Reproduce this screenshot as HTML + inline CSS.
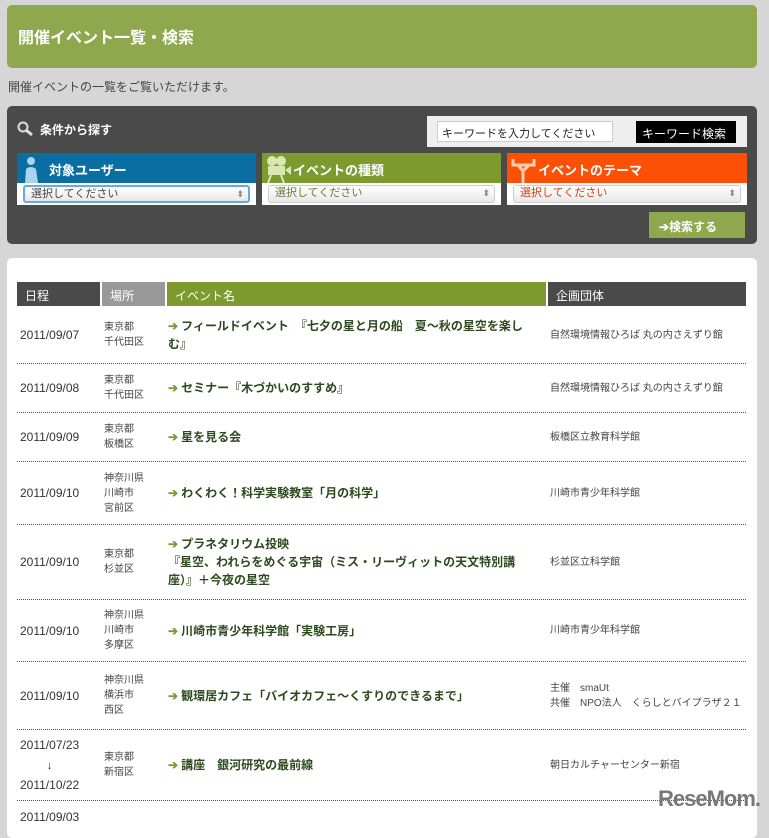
<!DOCTYPE html>
<html><head><meta charset="utf-8"><style>
*{margin:0;padding:0;box-sizing:border-box}
body{width:769px;height:822px;overflow:hidden;background:#d6d6d6;font-family:"Liberation Sans","Noto Sans CJK JP",sans-serif;position:relative;color:#333}
.abs{position:absolute}
.hdr{left:7px;top:5px;width:750px;height:63px;background:#8fa84e;border-radius:5px;color:#fff;font-weight:bold;font-size:16px;padding:19px 0 0 11px}
.sub{left:8px;top:78px;font-size:12px;color:#444}
.dark{left:7px;top:106px;width:750px;height:138px;background:#4a4a4a;border-radius:5px}
.sel{height:22px;background:#fff;position:relative}
.selbox{position:absolute;left:6px;top:2px;right:6px;height:18px;border:1px solid #ccc;border-radius:3px;background:linear-gradient(#fff,#e8e8e8);font-size:11px;line-height:15px;padding:0 0 0 6px}
.selbox:after{content:"⬍";position:absolute;right:4px;top:0;font-size:9px;color:#888}
.cat{height:30px;color:#fff;font-weight:bold;font-size:13px;padding:7px 0 0 32px;position:relative}
.white{left:7px;top:258px;width:750px;height:580px;background:#fff;border-radius:5px}
.th{top:282px;height:24px;color:#fff;font-size:12px;padding:5px 0 0 8px}
.row{left:17px;width:729px;border-bottom:1px dotted #555}
.c{position:absolute;top:0;bottom:0;display:flex;align-items:center}
.d{left:3px;font-size:12px;color:#333;text-align:center}
.p{left:87px;font-size:10px;line-height:15px;color:#444}
.e{left:151px;width:370px;font-size:12px;font-weight:bold;color:#2d4a1e;line-height:18px}
.o{left:533px;font-size:10px;color:#444;line-height:15px}
.ar{color:#7a9a3a;font-weight:bold;margin-right:3px}
</style></head><body>
<div class="abs hdr">開催イベント一覧・検索</div>
<div class="abs sub">開催イベントの一覧をご覧いただけます。</div>
<div class="abs dark"></div>
<svg class="abs" style="left:17px;top:121px" width="18" height="16"><circle cx="6" cy="6" r="4.5" fill="none" stroke="#ddd" stroke-width="2"/><line x1="9" y1="9" x2="15" y2="14" stroke="#ddd" stroke-width="3"/></svg>
<div class="abs" style="left:40px;top:121px;color:#fff;font-weight:bold;font-size:12px">条件から探す</div>
<div class="abs" style="left:427px;top:116px;width:320px;height:31px;background:#eee"></div>
<div class="abs" style="left:437px;top:121px;width:176px;height:21px;background:#fff;border:1px solid #ccc;font-size:11px;padding:3px 4px;color:#222">キーワードを入力してください</div>
<div class="abs" style="left:636px;top:121px;width:100px;height:22px;background:#000;color:#fff;font-size:12px;padding:4px 0 0 6px;white-space:nowrap">キーワード検索</div>
<div class="abs" style="left:17px;top:153px;width:239px"><div class="cat" style="background:#0b6ea2"><svg style="position:absolute;left:4px;top:2px" width="20" height="28"><circle cx="10" cy="6" r="4" fill="#a8d4f0"/><path d="M4 28 L5 14 Q10 10 15 14 L17 28 Z" fill="#a8d4f0"/></svg>対象ユーザー</div><div class="sel"><div class="selbox" style="border:2px solid #6aa8e0;color:#444">選択してください</div></div></div>
<div class="abs" style="left:262px;top:153px;width:239px"><div class="cat" style="background:#7c9a2e;padding-left:31px"><svg style="position:absolute;left:3px;top:2px" width="28" height="28"><circle cx="7" cy="6" r="5" fill="#d8e8b0"/><circle cx="16" cy="6" r="5" fill="#d8e8b0"/><rect x="3" y="11" width="17" height="9" fill="#d8e8b0"/><path d="M20 15 L26 11 L26 20 Z" fill="#d8e8b0"/><path d="M6 20 L3 28 M16 20 L19 28" stroke="#d8e8b0" stroke-width="2"/></svg>イベントの種類</div><div class="sel"><div class="selbox" style="color:#6a7a3a">選択してください</div></div></div>
<div class="abs" style="left:507px;top:153px;width:240px"><div class="cat" style="background:#fc5006;padding-left:31px"><svg style="position:absolute;left:3px;top:3px" width="28" height="28"><path d="M3 3 L3 9 L24 9 L24 3 M8 9 L13 15 L19 9 M13 15 L13 27" stroke="#ffd0b0" stroke-width="3" fill="none"/></svg>イベントのテーマ</div><div class="sel"><div class="selbox" style="color:#d04010">選択してください</div></div></div>
<div class="abs" style="left:649px;top:212px;width:96px;height:26px;background:#8fa84e;color:#fff;font-weight:bold;font-size:12px;padding:6px 0 0 10px">➔検索する</div>
<div class="abs white"></div>
<div class="abs th" style="left:17px;width:83px;background:#4a4a4a">日程</div>
<div class="abs th" style="left:102px;width:63px;background:#999">場所</div>
<div class="abs th" style="left:167px;width:379px;background:#7c9a2e">イベント名</div>
<div class="abs th" style="left:548px;width:198px;background:#4a4a4a">企画団体</div>

<div class="abs row" style="top:307px;height:57px"><div class="c d">2011/09/07</div><div class="c p">東京都<br>千代田区</div><div class="c e"><div><span class="ar">➔</span>フィールドイベント　『七夕の星と月の船　夏〜秋の星空を楽しむ』</div></div><div class="c o">自然環境情報ひろば 丸の内さえずり館</div></div>
<div class="abs row" style="top:364px;height:49px"><div class="c d">2011/09/08</div><div class="c p">東京都<br>千代田区</div><div class="c e"><div><span class="ar">➔</span>セミナー『木づかいのすすめ』</div></div><div class="c o">自然環境情報ひろば 丸の内さえずり館</div></div>
<div class="abs row" style="top:413px;height:49px"><div class="c d">2011/09/09</div><div class="c p">東京都<br>板橋区</div><div class="c e"><div><span class="ar">➔</span>星を見る会</div></div><div class="c o">板橋区立教育科学館</div></div>
<div class="abs row" style="top:462px;height:63px"><div class="c d">2011/09/10</div><div class="c p">神奈川県<br>川崎市<br>宮前区</div><div class="c e"><div><span class="ar">➔</span>わくわく！科学実験教室「月の科学」</div></div><div class="c o">川崎市青少年科学館</div></div>
<div class="abs row" style="top:525px;height:75px"><div class="c d">2011/09/10</div><div class="c p">東京都<br>杉並区</div><div class="c e"><div><span class="ar">➔</span>プラネタリウム投映<br>『星空、われらをめぐる宇宙（ミス・リーヴィットの天文特別講座）』＋今夜の星空</div></div><div class="c o">杉並区立科学館</div></div>
<div class="abs row" style="top:600px;height:62px"><div class="c d">2011/09/10</div><div class="c p">神奈川県<br>川崎市<br>多摩区</div><div class="c e"><div><span class="ar">➔</span>川崎市青少年科学館「実験工房」</div></div><div class="c o">川崎市青少年科学館</div></div>
<div class="abs row" style="top:662px;height:68px"><div class="c d">2011/09/10</div><div class="c p">神奈川県<br>横浜市<br>西区</div><div class="c e"><div><span class="ar">➔</span>観環居カフェ「バイオカフェ〜くすりのできるまで」</div></div><div class="c o">主催　smaUt<br>共催　NPO法人　くらしとバイプラザ２１</div></div>
<div class="abs row" style="top:730px;height:71px"><div class="c d" style="line-height:20px">2011/07/23<br>↓<br>2011/10/22</div><div class="c p">東京都<br>新宿区</div><div class="c e"><div><span class="ar">➔</span>講座　銀河研究の最前線</div></div><div class="c o">朝日カルチャーセンター新宿</div></div>
<div class="abs" style="left:20px;top:810px;font-size:12px;color:#333">2011/09/03</div>
<div class="abs" style="left:658px;top:786px;font-size:22px;font-weight:bold;color:#777;letter-spacing:-1px">ReseMom.</div>
</body></html>
